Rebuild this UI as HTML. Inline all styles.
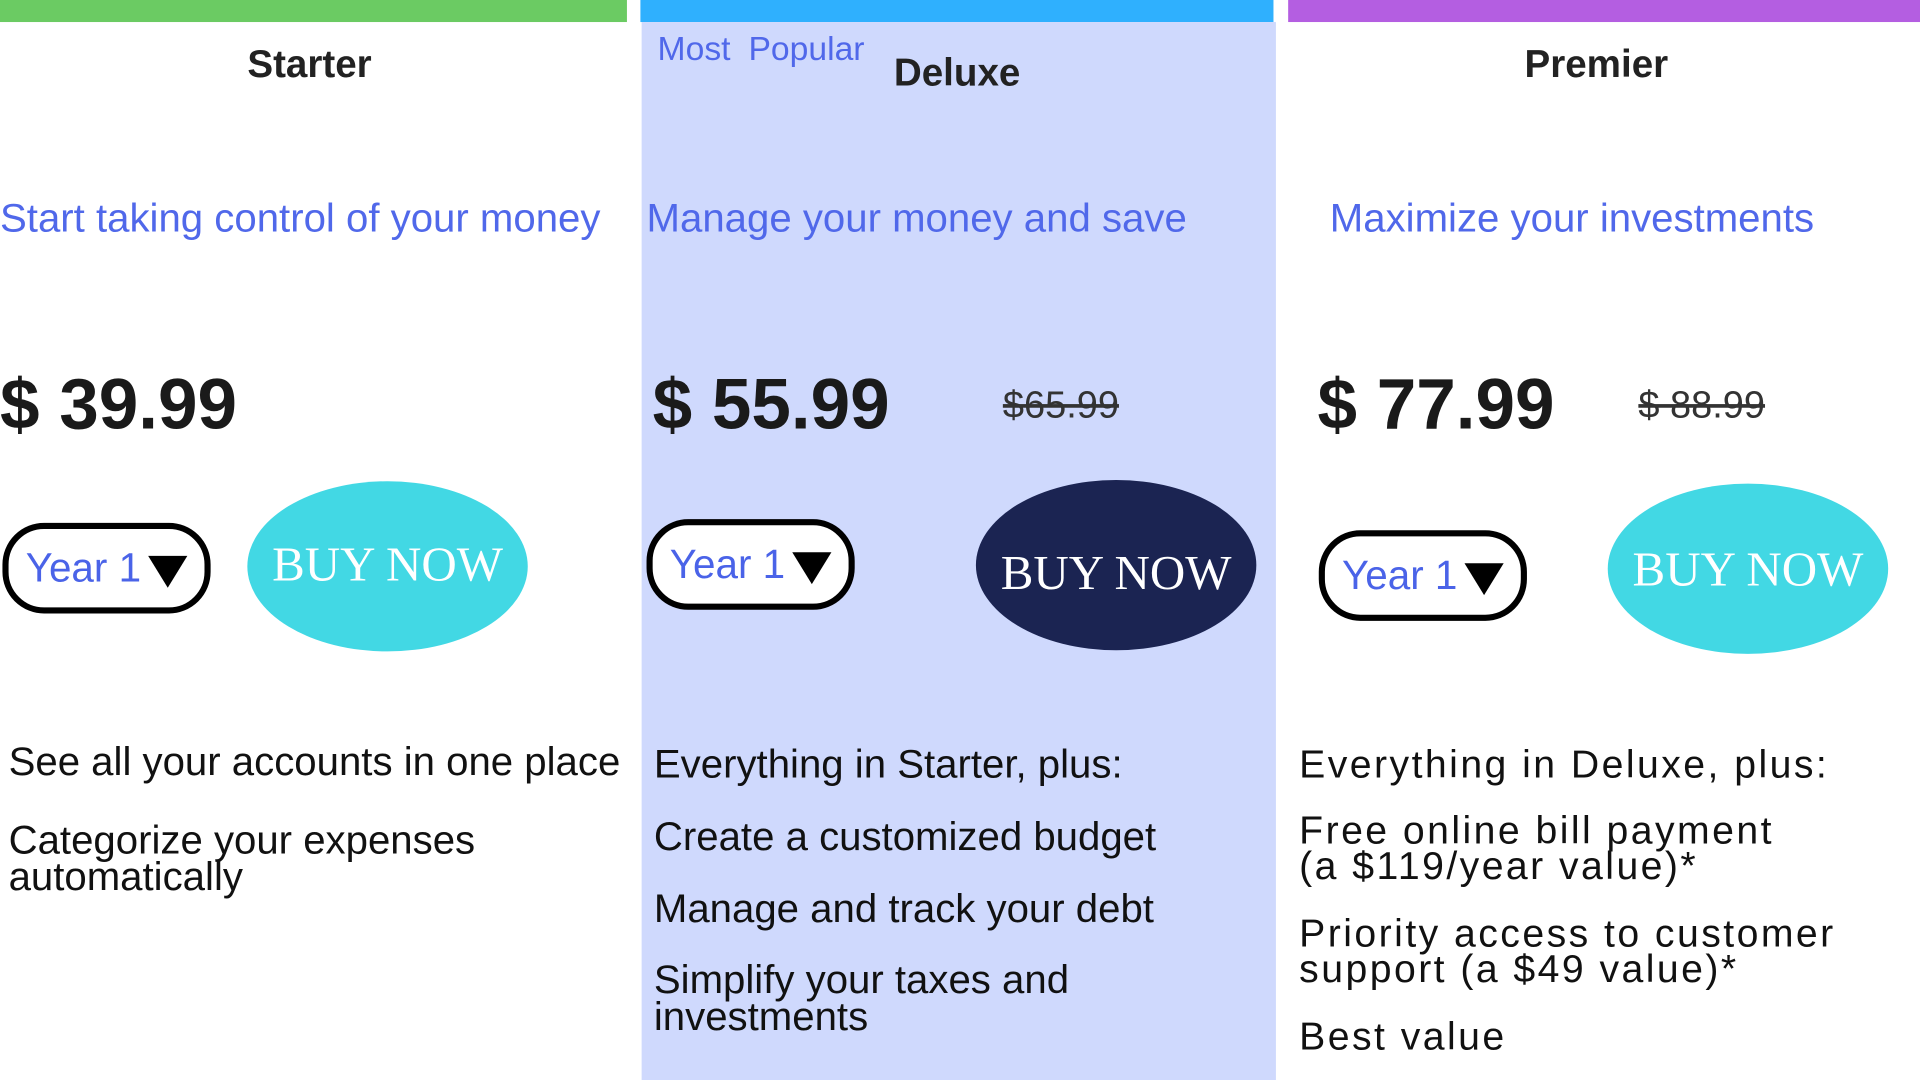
<!DOCTYPE html>
<html><head><meta charset="utf-8"><style>
html,body{margin:0;padding:0;background:#fff;overflow:hidden;width:1920px;height:1080px}
#s{position:absolute;left:0;top:0;width:1568px;height:882px;transform:scale(1.22449);transform-origin:0 0;font-family:"Liberation Sans",sans-serif}
.a{position:absolute;white-space:nowrap}
.t{font-weight:bold;font-size:31.5px;color:#222}
.sub{font-size:32.8px;color:#5068ea}
.p{font-weight:bold;font-size:58px;color:#1a1a1a}
.old{font-size:31px;color:#333;text-decoration:line-through}
.sel{position:absolute;width:160px;height:64px;border:5px solid #000;border-radius:34px;background:#fff}
.sel span{position:absolute;left:14px;top:13px;font-size:33px;color:#4a63e8}
.tri{position:absolute;right:14px;top:22px;width:0;height:0;border-left:16px solid transparent;border-right:16px solid transparent;border-top:26px solid #000}
.buy{position:absolute;width:229px;height:139px;border-radius:50%;background:#42d8e4;color:#fff;font-family:"Liberation Serif",serif;font-size:40px;text-align:center;line-height:139px}
.f{font-size:32.8px;color:#111;line-height:30px}
.pf{font-size:32px;letter-spacing:2px}
</style></head><body><div id="s">
<div class="a" style="left:0;top:0;width:512px;height:18px;background:#6bcb63"></div>
<div class="a" style="left:523px;top:0;width:517px;height:18px;background:#2fb0fe"></div>
<div class="a" style="left:1052px;top:0;width:516px;height:18px;background:#b45ee1"></div>
<div class="a" style="left:524px;top:18px;width:518px;height:864px;background:#cfd9fd"></div>

<div class="a t" style="left:202px;top:34px">Starter</div>
<div class="a" style="left:537px;top:24px;font-size:27.5px;color:#5068ea;word-spacing:7px">Most Popular</div>
<div class="a t" style="left:730px;top:41px">Deluxe</div>
<div class="a t" style="left:1245px;top:34px">Premier</div>

<div class="a sub" style="left:0;top:159px">Start taking control of your money</div>
<div class="a sub" style="left:528px;top:159px">Manage your money and save</div>
<div class="a sub" style="left:1086px;top:159px">Maximize your investments</div>

<div class="a p" style="left:0;top:297px">$ 39.99</div>
<div class="a p" style="left:533px;top:297px">$ 55.99</div>
<div class="a old" style="left:819px;top:313px">$65.99</div>
<div class="a p" style="left:1076px;top:297px">$ 77.99</div>
<div class="a old" style="left:1338px;top:313px">$ 88.99</div>

<div class="sel" style="left:2px;top:427px"><span>Year 1</span><div class="tri"></div></div>
<div class="sel" style="left:528px;top:424px"><span>Year 1</span><div class="tri"></div></div>
<div class="sel" style="left:1077px;top:433px"><span>Year 1</span><div class="tri"></div></div>

<div class="buy" style="left:202px;top:393px;line-height:135px">BUY NOW</div>
<div class="buy" style="left:797px;top:392px;background:#1b2452;line-height:152px">BUY NOW</div>
<div class="buy" style="left:1313px;top:395px">BUY NOW</div>

<div class="a f" style="left:7px;top:607px">See all your accounts in one place</div>
<div class="a f" style="left:7px;top:671px">Categorize your expenses<br>automatically</div>

<div class="a f" style="left:534px;top:609px">Everything in Starter, plus:</div>
<div class="a f" style="left:534px;top:668px">Create a customized budget</div>
<div class="a f" style="left:534px;top:727px">Manage and track your debt</div>
<div class="a f" style="left:534px;top:785px">Simplify your taxes and<br>investments</div>

<div class="a f pf" style="left:1061px;top:609px">Everything in Deluxe, plus:</div>
<div class="a f pf" style="left:1061px;top:664px;line-height:29px">Free online bill payment<br>(a $119/year value)*</div>
<div class="a f pf" style="left:1061px;top:748px;line-height:29px">Priority access to customer<br>support (a $49 value)*</div>
<div class="a f pf" style="left:1061px;top:831px">Best value</div>
</div></body></html>
